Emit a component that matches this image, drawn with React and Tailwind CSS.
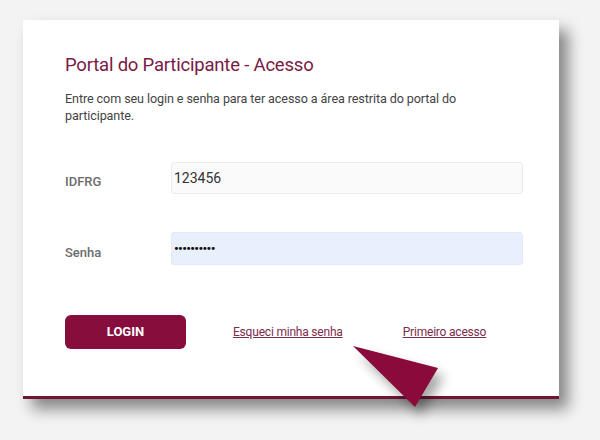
export default function App() {
  return (
    <div
      className="w-[600px] h-[440px] bg-[#f3f3f3] pt-[20px] pl-[23px] relative overflow-hidden"
      style={{ fontFamily: "Roboto, 'Liberation Sans', sans-serif" }}
    >
      <div className="w-[536px] h-[379px] bg-white border-b-[3px] border-[#6e1636] shadow-[9px_10px_14px_rgba(0,0,0,0.45)] pl-[42px] pt-[32px] flex flex-col">
        <h1 className="text-[18.5px] leading-[26px] text-[#7a1a44] tracking-[-0.2px]">Portal do Participante - Acesso</h1>
        <p className="mt-[12px] text-[12.6px] leading-[17px] text-[#444] w-[420px] tracking-[-0.1px]">
          Entre com seu login e senha para ter acesso a área restrita do portal do participante.
        </p>
        <div className="mt-[38px] flex items-center">
          <label className="w-[106px] text-[13px] font-medium text-[#6c6c6c] pt-[8px]">IDFRG</label>
          <div className="w-[352px] h-[32px] bg-[#fafafa] border border-[#ececec] rounded-[3px] flex items-center pl-[2px] text-[14px] text-[#333]">
            123456
          </div>
        </div>
        <div className="mt-[38px] flex items-center">
          <label className="w-[106px] text-[13px] font-medium text-[#6c6c6c] pt-[8px]">Senha</label>
          <div className="w-[352px] h-[33px] bg-[#e8effd] border border-[#e4e9f3] rounded-[3px] flex items-center pl-[2px] text-[13px] text-[#111] tracking-[-0.6px] font-bold">
            ••••••••••
          </div>
        </div>
        <div className="mt-[50px] flex items-center">
          <button className="w-[121px] h-[34px] rounded-[6px] bg-[#870d3d] text-white text-[13px] font-bold">LOGIN</button>
          <a className="ml-[47px] text-[12px] text-[#7b2d4d] underline tracking-[-0.2px]">Esqueci minha senha</a>
          <a className="ml-[60px] text-[12px] text-[#7b2d4d] underline tracking-[-0.2px]">Primeiro acesso</a>
        </div>
      </div>
      <svg
        className="absolute left-0 top-0"
        width="600"
        height="440"
        style={{ filter: "drop-shadow(6px 8px 6px rgba(0,0,0,0.35))" }}
      >
        <polygon points="353,346 438,368 415,407" fill="#8a0a3c" />
      </svg>
    </div>
  );
}
